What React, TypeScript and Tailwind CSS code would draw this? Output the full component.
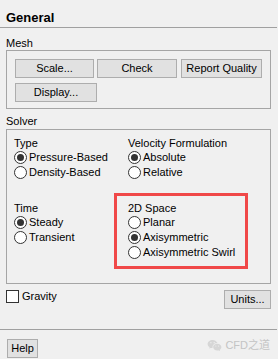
import { RiWechatFill } from "react-icons/ri";

function Btn({ label, w }: { label: string; w: string }) {
  return (
    <div
      className={`${w} flex h-[19px] items-center justify-center border border-[#adadad] bg-[#e1e1e1] leading-none text-black`}
    >
      {label}
    </div>
  );
}

function Radio({ label, on = false }: { label: string; on?: boolean }) {
  return (
    <div className="flex h-[15px] items-center">
      <span className="flex h-[13px] w-[13px] items-center justify-center rounded-full border border-[#333] bg-white">
        {on && <span className="h-[7px] w-[7px] rounded-full bg-[#333]" />}
      </span>
      <span className="ml-[2px] leading-none">{label}</span>
    </div>
  );
}

export default function App() {
  return (
    <div className="relative h-[359px] w-[278px] overflow-hidden bg-[#f0f0f0] font-['Liberation_Sans',Arial,sans-serif] text-[11px] text-black">
      {/* header */}
      <div className="w-[277px] border-b border-[#a0a0a0] px-[6px] pt-[9px] pb-[1px] text-[13px] font-bold leading-[17px]">
        General
      </div>

      {/* mesh */}
      <div className="px-[6px] pt-[8px] leading-[14px]">Mesh</div>
      <div className="mx-[6px] w-[265px] border border-[#a5a5a5] px-[8px] pt-[8px] pb-[6px]">
        <div className="flex">
          <Btn label="Scale..." w="w-[82px]" />
          <div className="ml-[3px]">
            <Btn label="Check" w="w-[80px]" />
          </div>
          <div className="ml-[4px]">
            <Btn label="Report Quality" w="w-[81px]" />
          </div>
        </div>
        <div className="mt-[5px] flex">
          <Btn label="Display..." w="w-[82px]" />
        </div>
      </div>

      {/* solver */}
      <div className="mt-[5px] px-[6px] leading-[15px]">Solver</div>
      <div className="mx-[6px] grid w-[265px] grid-cols-[114px_1fr] border border-[#a5a5a5] pt-[7px] pb-[23px] pl-[7px]">
        <div className="flex flex-col">
          <div className="h-[13px] leading-[13px]">Type</div>
          <Radio label="Pressure-Based" on />
          <Radio label="Density-Based" />
          <div className="mt-[21px] h-[14px] leading-[14px]">Time</div>
          <Radio label="Steady" on />
          <Radio label="Transient" />
        </div>
        <div className="flex flex-col">
          <div className="h-[13px] leading-[13px]">Velocity Formulation</div>
          <Radio label="Absolute" on />
          <Radio label="Relative" />
          <div className="mt-[21px] h-[14px] leading-[14px]">2D Space</div>
          <Radio label="Planar" />
          <Radio label="Axisymmetric" on />
          <Radio label="Axisymmetric Swirl" />
        </div>
      </div>

      {/* gravity + units */}
      <div className="mt-[6px] flex w-[278px] items-start justify-between pr-[7px] pl-[6px]">
        <div className="flex items-center">
          <span className="h-[13px] w-[13px] border border-[#333] bg-white" />
          <span className="ml-[3px] leading-none">Gravity</span>
        </div>
        <Btn label="Units..." w="w-[47px]" />
      </div>

      <div className="mt-[20px] w-[277px] border-t border-[#a0a0a0]" />

      <div className="mt-[9px] flex items-start justify-between pr-[8px] pl-[7px]">
        <Btn label="Help" w="w-[31px]" />
        <div className="mt-[-1px] flex items-center gap-[3px] text-[#c4c4c4]">
          <RiWechatFill className="h-[15px] w-[15px] text-[#d6d6d6]" />
          <span className="font-['Liberation_Sans','Noto_Sans_CJK_SC',sans-serif] text-[11px] leading-none">
            CFD之道
          </span>
        </div>
      </div>

      {/* annotation */}
      <div className="pointer-events-none absolute top-[193px] left-[114px] h-[76px] w-[134px] border-[3px] border-[#f04848]" />
    </div>
  );
}
